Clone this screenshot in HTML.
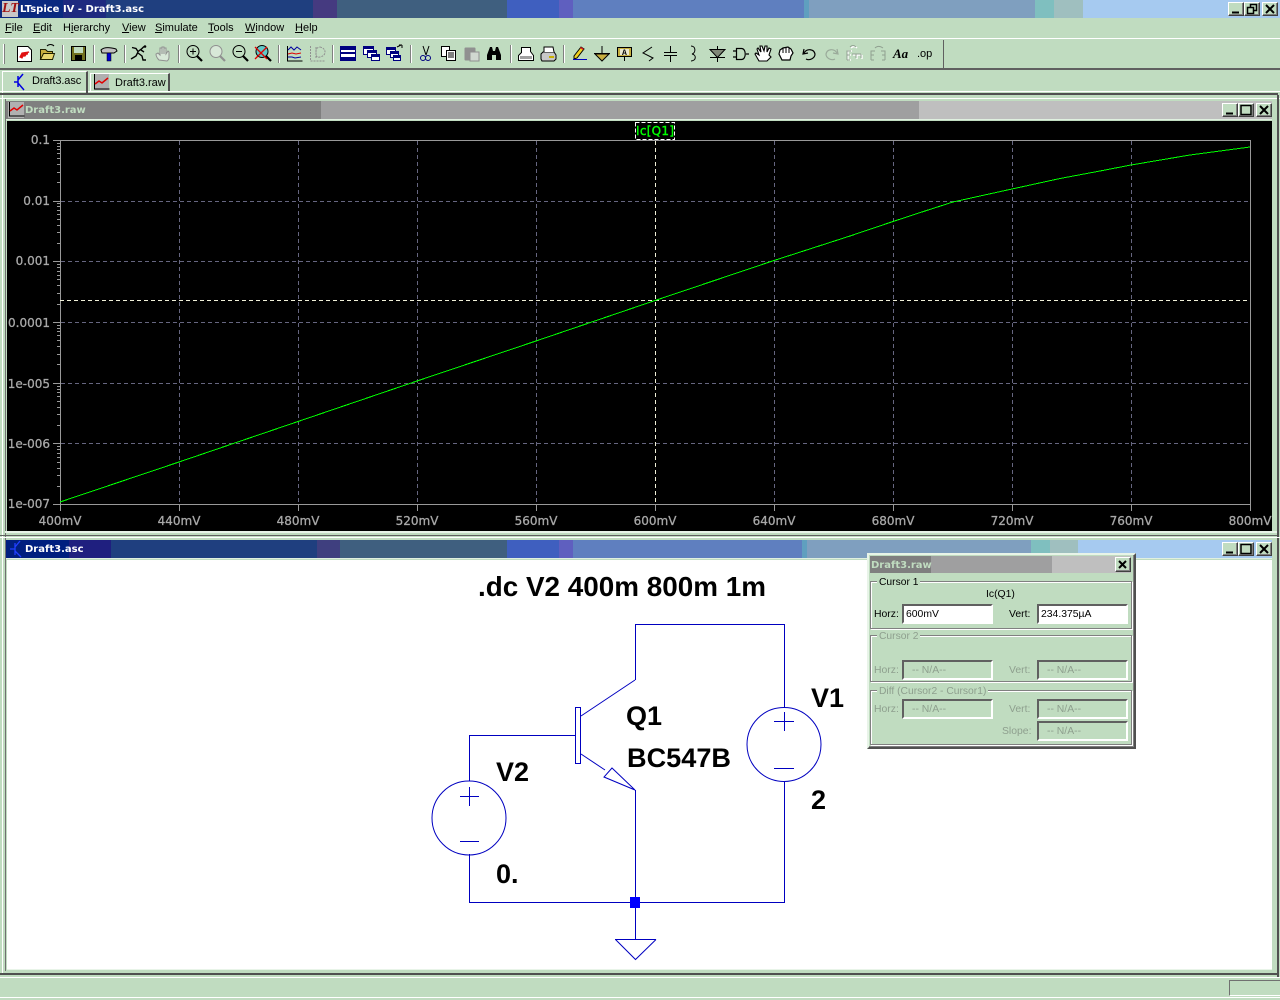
<!DOCTYPE html>
<html><head><meta charset="utf-8"><title>LTspice IV - Draft3.asc</title>
<style>
html,body{margin:0;padding:0;background:#c0dcc0}
body{width:1280px;height:1000px;position:relative;overflow:hidden;font:11px "Liberation Sans",sans-serif;color:#000}
.a{position:absolute;white-space:nowrap}
.seg{position:absolute;top:0;height:100%}
.tt{font:bold 10px "DejaVu Sans",sans-serif;position:absolute;white-space:nowrap;line-height:14px}
.btn{position:absolute;width:16px;height:14px;background:#c0dcc0;box-sizing:border-box;border:1px solid;border-color:#fff #404040 #404040 #fff;box-shadow:inset -1px -1px 0 #808080}
.m{position:absolute;top:22px;line-height:13px;font-size:11px}
.m u{text-decoration:underline}
.in{position:absolute;box-sizing:border-box;border:2px solid;border-color:#606060 #fff #fff #606060;width:91px;height:20px;line-height:18px;font-size:10.4px;padding-left:2px}
.in.w{background:#fff}
.dis{color:#8e9f8e}
.grp{position:absolute;box-sizing:border-box;border:1px solid #808080;box-shadow:1px 1px 0 #fff,inset 1px 1px 0 #fff}
.lg{position:absolute;background:#c0dcc0;padding:0 2px;line-height:12px;font-size:10.3px}
.lb{position:absolute;font-size:10.4px;line-height:13px}
svg{position:absolute;left:0;top:0}
</style></head><body>

<!-- main title -->
<div class="a" style="left:0;top:0;width:1280px;height:18px;background:#a6caf0">
<div class="seg" style="left:0;width:63px;background:#0a2a80"></div>
<div class="seg" style="left:63px;width:43px;background:#1f2a80"></div>
<div class="seg" style="left:106px;width:207px;background:#1f3f7f"></div>
<div class="seg" style="left:313px;width:24px;background:#453a80"></div>
<div class="seg" style="left:337px;width:170px;background:#3f5f7f"></div>
<div class="seg" style="left:507px;width:52px;background:#3f5fbf"></div>
<div class="seg" style="left:559px;width:14px;background:#5f5fbf"></div>
<div class="seg" style="left:573px;width:231px;background:#5f7fbf"></div>
<div class="seg" style="left:804px;width:5px;background:#5f9fbf"></div>
<div class="seg" style="left:809px;width:226px;background:#7f9fbf"></div>
<div class="seg" style="left:1035px;width:19px;background:#7fbfbf"></div>
<div class="seg" style="left:1054px;width:29px;background:#9fbfbf"></div>
</div>
<div class="a" style="left:2px;top:1px;width:16px;height:16px;background:#c8c8c8"></div>
<div class="a" style="left:2px;top:0;font:italic bold 14px 'Liberation Serif',serif;color:#a01010;line-height:17px">LT</div>
<div class="tt" style="left:20px;top:3px;color:#fff">LTspice IV - Draft3.asc</div>
<div class="btn" style="left:1228px;top:2px"></div><div class="btn" style="left:1244px;top:2px"></div><div class="btn" style="left:1262px;top:2px"></div>

<!-- menu -->
<div class="m" style="left:5px"><u>F</u>ile</div>
<div class="m" style="left:33px"><u>E</u>dit</div>
<div class="m" style="left:63px">H<u>i</u>erarchy</div>
<div class="m" style="left:122px"><u>V</u>iew</div>
<div class="m" style="left:155px"><u>S</u>imulate</div>
<div class="m" style="left:208px"><u>T</u>ools</div>
<div class="m" style="left:245px"><u>W</u>indow</div>
<div class="m" style="left:295px"><u>H</u>elp</div>

<!-- chrome lines -->
<div class="a" style="left:0;top:38px;width:1280px;height:1px;background:#fff"></div>
<div class="a" style="left:0;top:68px;width:1280px;height:2px;background:#606060"></div>
<div class="a" style="left:0;top:91px;width:1280px;height:1px;background:#fff"></div>
<div class="a" style="left:0;top:93px;width:1278px;height:2px;background:#505050"></div>
<div class="a" style="left:0;top:98px;width:1280px;height:1px;background:#fff"></div>
<div class="a" style="left:943px;top:40px;width:1px;height:28px;background:#606060"></div>

<!-- tabs -->
<div class="a" style="left:2px;top:71px;width:86px;height:22px;box-sizing:border-box;border-top:1px solid #fff;border-left:1px solid #fff;border-right:2px solid #505050"></div>
<div class="a" style="left:90px;top:73px;width:80px;height:18px;box-sizing:border-box;border-top:1px solid #fff;border-left:1px solid #fff;border-right:2px solid #505050"></div>
<div class="lb" style="left:32px;top:75px;font-size:11px;letter-spacing:-.1px">Draft3.asc</div>
<div class="lb" style="left:115px;top:77px;font-size:11px">Draft3.raw</div>

<!-- upper child -->
<div class="a" style="left:6px;top:101px;width:1266px;height:18px;background:#bfbfbf">
<div class="seg" style="left:0;width:315px;background:#7f7f7f"></div>
<div class="seg" style="left:315px;width:598px;background:#9f9fa0"></div>
</div>
<div class="a" style="left:6px;top:119px;width:1266px;height:1px;background:#e0f0e0"></div>
<div class="tt" style="left:25px;top:104px;color:#c0dcc0">Draft3.raw</div>
<div class="btn" style="left:1222px;top:103px"></div><div class="btn" style="left:1238px;top:103px"></div><div class="btn" style="left:1256px;top:103px"></div>
<div class="a" style="left:7px;top:121px;width:1265px;height:410px;background:#000"></div>

<!-- plot -->
<svg width="1280" height="1000" viewBox="0 0 1280 1000" shape-rendering="crispEdges">
<g fill="none" stroke="#666680" stroke-dasharray="4 3">
<path d="M179.5 141V504M298.5 141V504M417.5 141V504M536.5 141V504M774.5 141V504M893.5 141V504M1012.5 141V504M1131.5 141V504"/>
<path d="M61 201.5H1250M61 261.5H1250M61 322.5H1250M61 383.5H1250M61 443.5H1250"/>
</g>
<path d="M60.5 140.5H1250.5V504.5H60.5Z" fill="none" stroke="#999"/>
<g stroke="#999" fill="none">
<path d="M53 140.5H60M53 201.5H60M53 261.5H60M53 322.5H60M53 383.5H60M53 443.5H60M53 504.5H60"/>
<path d="M57 486.5h3M57 475.5h3M57 468.5h3M57 462.5h3M57 457.5h3M57 453.5h3M57 449.5h3M57 446.5h3"/>
<path d="M57 425.5h3M57 414.5h3M57 407.5h3M57 401.5h3M57 396.5h3M57 392.5h3M57 389.5h3M57 386.5h3"/>
<path d="M57 364.5h3M57 354.5h3M57 346.5h3M57 340.5h3M57 335.5h3M57 331.5h3M57 328.5h3M57 325.5h3"/>
<path d="M57 304.5h3M57 293.5h3M57 285.5h3M57 279.5h3M57 275.5h3M57 271.5h3M57 267.5h3M57 264.5h3"/>
<path d="M57 243.5h3M57 232.5h3M57 225.5h3M57 219.5h3M57 214.5h3M57 210.5h3M57 206.5h3M57 203.5h3"/>
<path d="M57 182.5h3M57 172.5h3M57 164.5h3M57 158.5h3M57 153.5h3M57 149.5h3M57 146.5h3M57 143.5h3"/>
<path d="M60.5 505V511M179.5 505V511M298.5 505V511M417.5 505V511M536.5 505V511M655.5 505V511M774.5 505V511M893.5 505V511M1012.5 505V511M1131.5 505V511M1250.5 505V511"/>
</g>
<path d="M655.5 141V504M60 300.5H1250" stroke="#f0f0d8" stroke-dasharray="4 3" fill="none"/>
<path d="M635.5 122.5H674.5V139.5H635.5Z" fill="#000" stroke="#fff" stroke-dasharray="4 2"/>
<polyline shape-rendering="crispEdges" fill="none" stroke="#00ff00" stroke-width="1" points="60,502 179,462 298,421.5 417,381 536,341 655,300.5 774,260.5 850,236 893,221.5 925,211 953,202 980,196 1012,189 1060,178.5 1100,171 1131,165 1190,155 1250,147"/>
<g font-family="DejaVu Sans, sans-serif" font-size="12" fill="#a8a8a8" font-weight="400" stroke="#a8a8a8" stroke-width=".3" shape-rendering="auto">
<g text-anchor="end">
<text x="50" y="144">0.1</text><text x="50" y="205">0.01</text><text x="50" y="265">0.001</text><text x="50" y="327">0.0001</text><text x="50" y="388">1e-005</text><text x="50" y="448">1e-006</text><text x="50" y="508">1e-007</text>
</g>
<g text-anchor="middle">
<text x="60" y="525">400mV</text><text x="179" y="525">440mV</text><text x="298" y="525">480mV</text><text x="417" y="525">520mV</text><text x="536" y="525">560mV</text><text x="655" y="525">600mV</text><text x="774" y="525">640mV</text><text x="893" y="525">680mV</text><text x="1012" y="525">720mV</text><text x="1131" y="525">760mV</text><text x="1250" y="525">800mV</text>
</g>
</g>
<text x="636" y="135" font-family="DejaVu Sans, sans-serif" font-size="12" fill="#00ff00" stroke="#00ff00" stroke-width=".4" textLength="38" shape-rendering="auto">Ic[Q1]</text>
</svg>

<!-- frame between -->
<div class="a" style="left:2px;top:95px;width:1px;height:880px;background:#fff"></div>
<div class="a" style="left:5px;top:99px;width:1px;height:872px;background:#707070"></div>
<div class="a" style="left:1277px;top:95px;width:2px;height:882px;background:#505050"></div>
<div class="a" style="left:5px;top:531px;width:1272px;height:2px;background:#e8f4e8"></div>
<div class="a" style="left:0;top:535px;width:1277px;height:1px;background:#606060"></div>
<div class="a" style="left:0;top:537px;width:1280px;height:1px;background:#fff"></div>

<!-- lower child -->
<div class="a" style="left:6px;top:540px;width:1266px;height:18px;background:#a6caf0">
<div class="seg" style="left:0;width:63px;background:#001f7f"></div>
<div class="seg" style="left:63px;width:42px;background:#1f1f7f"></div>
<div class="seg" style="left:105px;width:206px;background:#1f3f7f"></div>
<div class="seg" style="left:311px;width:23px;background:#3f3f7f"></div>
<div class="seg" style="left:334px;width:167px;background:#3f5f7f"></div>
<div class="seg" style="left:501px;width:52px;background:#3f5fbf"></div>
<div class="seg" style="left:553px;width:14px;background:#5f5fbf"></div>
<div class="seg" style="left:567px;width:229px;background:#5f7fbf"></div>
<div class="seg" style="left:796px;width:5px;background:#5f9fbf"></div>
<div class="seg" style="left:801px;width:224px;background:#7f9fbf"></div>
<div class="seg" style="left:1025px;width:19px;background:#7fbfbf"></div>
<div class="seg" style="left:1044px;width:28px;background:#9fbfbf"></div>
</div>
<div class="a" style="left:6px;top:558px;width:1266px;height:1px;background:#e0f0e0"></div>
<div class="tt" style="left:25px;top:543px;color:#fff">Draft3.asc</div>
<div class="btn" style="left:1222px;top:542px"></div><div class="btn" style="left:1238px;top:542px"></div><div class="btn" style="left:1256px;top:542px"></div>
<div class="a" style="left:7px;top:560px;width:1265px;height:409px;background:#fff;border-bottom:1px solid #e8f4e8"></div>

<!-- schematic -->
<svg width="1280" height="1000" viewBox="0 0 1280 1000">
<g fill="none" stroke="#0000c0" stroke-width="1">
<path shape-rendering="crispEdges" d="M635.5 680V624.5H784.5V707M784.5 782V902.5H469.5V854M469.5 781V735.5H576M635.5 790V907M635.5 907V939M615 939.5H656"/>
<circle cx="784" cy="744.5" r="37"/><circle cx="469" cy="818" r="37"/>
<path shape-rendering="crispEdges" d="M575.5 707.5H580.5V763.5H575.5Z"/>
<path d="M581 716L635 680M581 754L605 770M612 768L604 777L635 790ZM615.5 939.5L635.5 959.5L656 939.5"/>
<path shape-rendering="crispEdges" d="M774 721.5H794M784.5 712V731M774 768.5H794M460 796.5H479M469.5 787V806M460 841.5H479"/>
</g>
<rect x="630" y="897" width="10" height="11" fill="#0000ff"/>
<g font-family="Liberation Sans, sans-serif" font-weight="700" font-size="27" fill="#000">
<text x="478" y="596" font-size="27.5" textLength="288" lengthAdjust="spacingAndGlyphs">.dc V2 400m 800m 1m</text>
<text x="626" y="725">Q1</text><text x="627" y="767" textLength="104" lengthAdjust="spacingAndGlyphs">BC547B</text>
<text x="811" y="707">V1</text><text x="811" y="809">2</text>
<text x="496" y="781">V2</text><text x="496" y="883">0.</text>
</g>
</svg>

<!-- cursor dialog -->
<div class="a" style="left:867px;top:553px;width:269px;height:196px;background:#c0dcc0;box-sizing:border-box;border:2px solid;border-color:#e8f4e8 #505050 #505050 #e8f4e8;box-shadow:inset -1px -1px 0 #808080"></div>
<div class="a" style="left:870px;top:556px;width:261px;height:17px;background:#bfbfbf">
<div class="seg" style="left:0;width:61px;background:#7f7f7f"></div>
<div class="seg" style="left:61px;width:121px;background:#9f9fa0"></div>
</div>
<div class="tt" style="left:871px;top:559px;color:#c0dcc0">Draft3.raw</div>
<div class="btn" style="left:1115px;top:557px;height:15px"></div>
<div class="grp" style="left:870px;top:581px;width:262px;height:48px"></div>
<div class="grp" style="left:870px;top:635px;width:262px;height:47px"></div>
<div class="grp" style="left:870px;top:690px;width:262px;height:55px"></div>
<div class="lg" style="left:877px;top:577px">Cursor 1</div>
<div class="lg dis" style="left:877px;top:631px">Cursor 2</div>
<div class="lg dis" style="left:877px;top:686px">Diff (Cursor2 - Cursor1)</div>
<div class="lb" style="left:986px;top:588px">Ic(Q1)</div>
<div class="lb" style="left:874px;top:608px">Horz:</div><div class="lb" style="left:1009px;top:608px">Vert:</div>
<div class="in w" style="left:902px;top:604px">600mV</div><div class="in w" style="left:1037px;top:604px">234.375µA</div>
<div class="lb dis" style="left:874px;top:664px">Horz:</div><div class="lb dis" style="left:1009px;top:664px">Vert:</div>
<div class="in dis" style="left:902px;top:660px;padding-left:8px">-- N/A--</div><div class="in dis" style="left:1037px;top:660px;padding-left:8px">-- N/A--</div>
<div class="lb dis" style="left:874px;top:703px">Horz:</div><div class="lb dis" style="left:1009px;top:703px">Vert:</div>
<div class="in dis" style="left:902px;top:699px;padding-left:8px">-- N/A--</div><div class="in dis" style="left:1037px;top:699px;padding-left:8px">-- N/A--</div>
<div class="lb dis" style="left:1002px;top:725px">Slope:</div>
<div class="in dis" style="left:1037px;top:721px;padding-left:8px">-- N/A--</div>

<!-- bottom -->
<div class="a" style="left:0;top:973px;width:1279px;height:2px;background:#505050"></div>
<div class="a" style="left:0;top:977px;width:1280px;height:1px;background:#fff"></div>
<div class="a" style="left:1229px;top:980px;width:51px;height:16px;box-sizing:border-box;border-top:1px solid #707070;border-left:1px solid #707070;border-bottom:1px solid #fff"></div>
<div class="a" style="left:0;top:997px;width:1280px;height:1px;background:#fff"></div>

<!-- icons -->
<svg width="1280" height="1000" viewBox="0 0 1280 1000">
<!-- window buttons -->
<g stroke="#000" fill="none" stroke-width="1.5">
<path d="M1232 12.5h7" stroke-width="2"/>
<path d="M1247.5 7.5h6v6h-6zM1250.5 7V4.5h6v6h-3"/>
<path d="M1266 5l8 8M1274 5l-8 8" stroke-width="2"/>
<path d="M1226 113.5h7" stroke-width="2"/>
<path d="M1241 105.5h10v9h-10z"/>
<path d="M1260 106l8 8M1268 106l-8 8" stroke-width="2"/>
<path d="M1226 552.5h7" stroke-width="2"/>
<path d="M1241 544.5h10v9h-10z"/>
<path d="M1260 545l8 8M1268 545l-8 8" stroke-width="2"/>
<path d="M1119 561l7 7M1126 561l-7 7" stroke-width="2"/>
</g>
<!-- grip and separators -->
<path d="M3.5 44V64" stroke="#fff" stroke-width="1"/><path d="M4.5 44V64" stroke="#808080" stroke-width="1"/>
<g stroke="#808080" stroke-width="1" shape-rendering="crispEdges">
<path d="M62.5 45V63M93.5 45V63M124.5 45V63M178.5 45V63M278.5 45V63M332.5 45V63M410.5 45V63M510.5 45V63M563.5 45V63"/>
</g>
<g stroke="#fff" stroke-width="1" shape-rendering="crispEdges">
<path d="M63.5 45V63M94.5 45V63M125.5 45V63M179.5 45V63M279.5 45V63M333.5 45V63M411.5 45V63M511.5 45V63M564.5 45V63"/>
</g>
<!-- new schematic -->
<path d="M17.5 46.5H28L31.5 50V61.5H17.5Z" fill="#fff" stroke="#000"/><path d="M20 57l2-4 7-1-2 1-2 3-2 0-1 2zM22 54h6" stroke="#e01010" stroke-width="1.2" fill="#e01010"/>
<!-- open -->
<path d="M40.5 49.5h5l2 2h5v8h-12z" fill="#c8b040" stroke="#202000"/><path d="M40.5 59.5l3-6h11l-2 6z" fill="#e8d870" stroke="#202000"/><path d="M47 46c2-2 5-2 7 0" fill="none" stroke="#000"/>
<!-- save -->
<rect x="71.5" y="46.5" width="14" height="14" fill="#707020" stroke="#000"/><rect x="74" y="47" width="9" height="6" fill="#c0dcc0"/><rect x="75" y="55" width="7" height="5" fill="#000"/>
<!-- hammer -->
<path d="M101 50c3-3 8-3 15-1l1 2-3 2h-12z" fill="#c0c0c0" stroke="#000"/><rect x="107" y="53" width="4" height="8" fill="#0000d0" stroke="#000" stroke-width=".5"/>
<!-- run -->
<path d="M132 47.5l4 1 2 3 4-3 2-2M138 52l-2 4-5 3M138 53l4 3 1 4 3 0M141 50l3 2" fill="none" stroke="#000" stroke-width="1.4"/><circle cx="145" cy="46.5" r="1.3"/>
<!-- halt -->
<path d="M159 60c-2-2-3-4-3-6l2-1 2 2v-7h2v6-7h2v7-6h2v6l2-3 1 1v5c0 3-1 3-2 4z" fill="#d8e8d8" stroke="#909090"/>
<!-- zoom -->
<g fill="#c0dcc0" stroke="#000" stroke-width="1">
<circle cx="193" cy="51.5" r="6"/><path d="M190 51.5h6M193 48.5v6" fill="none"/><path d="M197 56l5 5" stroke-width="2.2"/>
<g stroke="#909090"><circle cx="216" cy="51.5" r="6" fill="#d8e8d8"/><path d="M220 56l5 5" stroke-width="2.2"/></g>
<circle cx="239" cy="51.5" r="6"/><path d="M236 51.5h6" fill="none"/><path d="M243 56l5 5" stroke-width="2.2"/>
<circle cx="262" cy="51.5" r="6" fill="#60c8c8"/><path d="M266 56l5 5" stroke-width="2.2"/><path d="M255 47l12 12M267 47l-12 12" stroke="#e00000" stroke-width="1.3" fill="none"/>
</g>
<!-- plots -->
<path d="M287.5 46v15h15" fill="none" stroke="#000"/><path d="M288 50l3-3 3 3 3-3 4 3" fill="none" stroke="#0000a0"/><path d="M288 54l4-1 4 1 5-1" fill="none" stroke="#e00000"/><path d="M288 57h4l3 1 6-1" fill="none" stroke="#0000a0"/>
<path d="M310.5 46v15h15M320 47c4 1 5 3 5 5s-1 4-5 5-4-2-4-5 0-4 4-5zM316 47v11" fill="none" stroke="#909090" stroke-dasharray="2 1"/>
<!-- windows -->
<rect x="340.5" y="46.5" width="15" height="14" fill="#fff" stroke="#000080" stroke-width="1"/><rect x="341" y="47" width="14" height="3" fill="#000080"/><rect x="341" y="52" width="14" height="2" fill="#000080"/><rect x="341" y="57" width="14" height="3" fill="#000080"/>
<g stroke="#000080" fill="#fff"><rect x="363.5" y="46.5" width="10" height="8"/><rect x="367.5" y="50.5" width="9" height="7"/><rect x="371.5" y="54.5" width="8" height="6"/></g><path d="M364 47h9v2h-9zM368 51h8v2h-8zM372 55h7v2h-7z" fill="#000080"/>
<g stroke="#000080" fill="#fff"><rect x="386.5" y="47.5" width="9" height="7"/><rect x="390.5" y="51.5" width="8" height="6"/><rect x="393.5" y="55.5" width="7" height="5"/></g><path d="M387 48h8v2h-8zM391 52h7v2h-7zM394 56h6v2h-6z" fill="#000080"/><path d="M397 47l4-2M402 45h-3M402 45v3" stroke="#000" fill="none"/>
<!-- cut copy paste -->
<path d="M423 46l3 9M429 46l-3 9" stroke="#000" fill="none"/><circle cx="423" cy="58" r="2.5" fill="none" stroke="#000080"/><circle cx="428" cy="58" r="2.5" fill="none" stroke="#000080"/>
<rect x="441.5" y="46.5" width="8" height="10" fill="#fff" stroke="#000"/><rect x="446.5" y="50.5" width="9" height="10" fill="#fff" stroke="#000"/><path d="M448 53h6M448 55h6M448 57h6" stroke="#000"/>
<rect x="464.5" y="47.5" width="11" height="13" fill="#909090" rx="1"/><rect x="470" y="52" width="9" height="9" fill="#d0d8d0" stroke="#909090"/>
<path d="M487 60v-5l3-8h2l1 4h2l1-4h2l3 8v5h-5v-5h-4v5z" fill="#000"/>
<!-- print -->
<path d="M518.5 55.5l3-3v-5h9v4l3 4v5h-15z" fill="#fff" stroke="#000"/><path d="M520 56h12v3h-12z" fill="#a0a0a0"/>
<path d="M541 54l2-2h11l2 3v4l-2 2h-12l-1-2z" fill="#c8c8c8" stroke="#000"/><path d="M544 52v-5h9l1 5" fill="#fff" stroke="#000"/><path d="M549 57h5" stroke="#c8b000" stroke-width="2"/>
<!-- pencil -->
<path d="M574 56l7-9 3 2-7 9-3 1z" fill="#f0d020" stroke="#000"/><path d="M581 47l3 2-1 1-3-2z" fill="#e02020"/><path d="M573 59.5h14" stroke="#0000c0" stroke-width="1"/>
<!-- ground -->
<path d="M602 46v7M594 53.5h16" stroke="#000" fill="none"/><path d="M595 54h14l-7 7z" fill="#c8b040" stroke="#000"/>
<!-- label -->
<rect x="617.5" y="47.5" width="14" height="9" fill="#c8b040" stroke="#000"/><rect x="620" y="49" width="9" height="6" fill="#e8e8d0"/><text x="622" y="55" font-family="Liberation Mono,monospace" font-size="8" font-weight="700">A</text><path d="M624.5 56v5" stroke="#000"/>
<!-- resistor/cap/ind -->
<path d="M652 47l-9 6 10 5-4 3" fill="none" stroke="#000"/>
<path d="M670.5 46v6M664 52.5h13M664 55.5h13M670.5 56v6" stroke="#000" fill="none"/>
<path d="M691 46c5 0 5 7 1 8 5 1 4 7-1 7" stroke="#000" fill="none"/>
<!-- diode -->
<path d="M717.5 46v4M710 49.5h15l-7.5 8zM710 57.5h15M717.5 58v4" stroke="#000" fill="#808878"/>
<!-- gate -->
<path d="M736.5 48.5h5c5 0 5 11 0 11h-5z M733 51h3.5M733 57h3.5M746 54h3" stroke="#000" fill="none" stroke-width="1.2"/>
<!-- hands -->
<path d="M759 61l-4-7 1-1 3 2-2-6 1-1 3 4-1-6 2 0 2 5 1-5 2 0 0 6 2-4 2 1-2 6 2 2-2 2-2 2z" fill="#fff" stroke="#000" stroke-width="1.1"/>
<path d="M782 60l-3-6 1-4 3-2 5-1 3 2 2 4-2 3-1 4z" fill="#fff" stroke="#000" stroke-width="1.2"/><path d="M783 48v5M786 47v6M789 48v5" stroke="#000"/>
<!-- undo redo -->
<path d="M804 49l-1 5 5-1M804 53c3-5 10-4 11 1 0 4-5 7-9 5" fill="none" stroke="#000" stroke-width="1.2"/>
<path d="M837 49l1 5-5-1M837 53c-3-5-10-4-11 1 0 4 5 7 9 5" fill="none" stroke="#9aaa9a" stroke-width="1.2"/>
<!-- rotate mirror disabled -->
<path d="M848 60v-9h4M848 55h3M848 60h3M853 55h9M857 55v4M862 55v4M851 48c2-2 4-2 6 0" fill="none" stroke="#fff" stroke-width="1.4"/><path d="M847 60v-9h4M847 55h3M847 60h3M852 54h9M856 54v4M861 54v4M850 47c2-2 4-2 6 0" fill="none" stroke="#90a090"/>
<path d="M871 60v-9h4M871 55h3M871 60h3M885 60v-9h-4M885 55h-3M885 60h-3M875 48c2-2 5-2 8 0" fill="none" stroke="#90a090"/>
</svg>
<div class="a" style="left:893px;top:46px;font:italic bold 13px 'Liberation Serif',serif;line-height:16px">Aa</div>
<div class="a" style="left:917px;top:47px;font:11px 'Liberation Sans',sans-serif;line-height:14px">.op</div>
<!-- tab and title icons -->
<svg width="1280" height="1000" viewBox="0 0 1280 1000">
<path d="M14 82h4M18 76v11M18 80l5-6M18 83l6 7" stroke="#0000e0" stroke-width="1.5" fill="none"/>
<rect x="94" y="74" width="15" height="16" fill="#b0b0b0"/><path d="M94.5 74v15h15" stroke="#000" fill="none"/><path d="M95 84l4-3 3 2 6-5" stroke="#e00000" stroke-width="1.5" fill="none"/>
<rect x="8" y="102" width="16" height="16" fill="#b0b0b0"/><path d="M9.5 102v14h15" stroke="#000" fill="none"/><path d="M10 111l4-3 3 2 6-5" stroke="#e00000" stroke-width="1.5" fill="none"/>
<path d="M10 549h5M15 543v12M15 547l5-6M15 551l6 6" stroke="#2040ff" stroke-width="1.3" fill="none"/>
</svg>
</body></html>
